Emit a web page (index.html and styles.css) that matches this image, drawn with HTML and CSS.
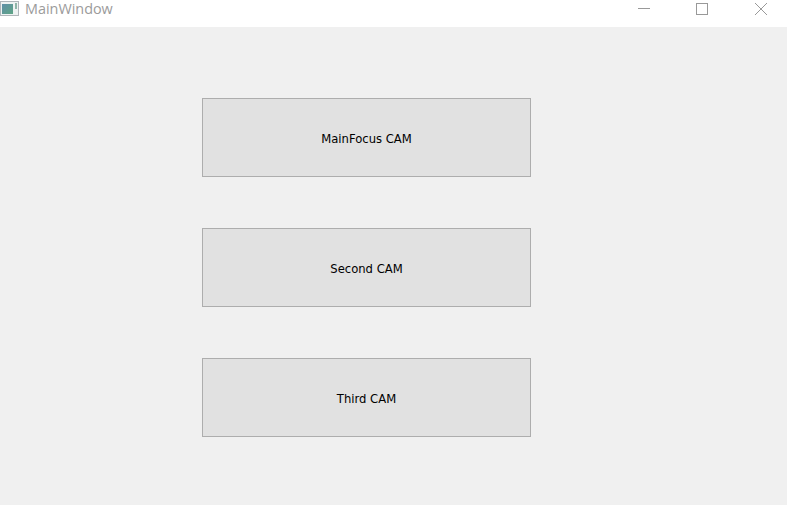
FILE: index.html
```html
<!DOCTYPE html>
<html lang="en">
<head>
    <meta charset="UTF-8">
    <meta name="viewport" content="width=device-width, initial-scale=1.0">
    <title>MainWindow</title>
    <link rel="stylesheet" href="styles.css">
</head>
<body>
    <div class="titlebar">
        <svg class="app-icon" width="20" height="16" viewBox="0 0 20 16">
            <defs>
                <linearGradient id="iconFill" x1="0" y1="0" x2="1" y2="1">
                    <stop offset="0" stop-color="#5f8fa8"/>
                    <stop offset="1" stop-color="#5fa585"/>
                </linearGradient>
            </defs>
            <rect x="0.5" y="0.5" width="18" height="14" fill="#eef2f2" stroke="#b0b6ba"/>
            <rect x="2" y="3" width="11" height="10" fill="url(#iconFill)"/>
            <rect x="15" y="2" width="2" height="6" fill="#8fb5a8"/>
        </svg>
        <span class="title">MainWindow</span>
        <div class="window-controls">
            <svg class="control" width="58" height="16" viewBox="0 0 58 16">
                <path d="M23 7.5H35" stroke="#999" fill="none"/>
            </svg>
            <svg class="control control-max" width="58" height="16" viewBox="0 0 58 16">
                <rect x="23.5" y="2.5" width="11" height="11" stroke="#999" fill="none"/>
            </svg>
            <svg class="control" width="58" height="16" viewBox="0 0 58 16">
                <path d="M23 2L35 14M35 2L23 14" stroke="#999" fill="none"/>
            </svg>
        </div>
    </div>
    <div class="content">
        <button class="cam-button">MainFocus CAM</button>
        <button class="cam-button">Second CAM</button>
        <button class="cam-button">Third CAM</button>
    </div>
</body>
</html>
```

FILE: styles.css
```css
html, body {
    height: 100%;
}
body {
    margin: 0;
    display: flex;
    flex-direction: column;
    background-color: #f0f0f0;
    overflow: hidden;
}
.titlebar {
    display: flex;
    align-items: center;
    height: 27px;
    flex-shrink: 0;
    padding-bottom: 10px;
    box-sizing: border-box;
    background-color: #fff;
}
.app-icon {
    flex-shrink: 0;
}
.title {
    margin-left: 5px;
    font-family: "Open Sans", sans-serif;
    font-size: 14.4px;
    color: #9b9b9b;
}
.window-controls {
    display: flex;
    margin-left: auto;
    margin-right: -3px;
}
.control {
    display: block;
}
.control-max {
    margin-right: 1px;
}
.content {
    display: flex;
    flex-direction: column;
    align-items: flex-start;
    gap: 51px;
    padding: 71px 0 0 202px;
}
.cam-button {
    width: 329px;
    height: 79px;
    padding: 2px 0 0;
    border: 1px solid #adadad;
    border-radius: 0;
    background-color: #e1e1e1;
    font-family: "DejaVu Sans", sans-serif;
    font-size: 11.6px;
    color: #000;
}
```
